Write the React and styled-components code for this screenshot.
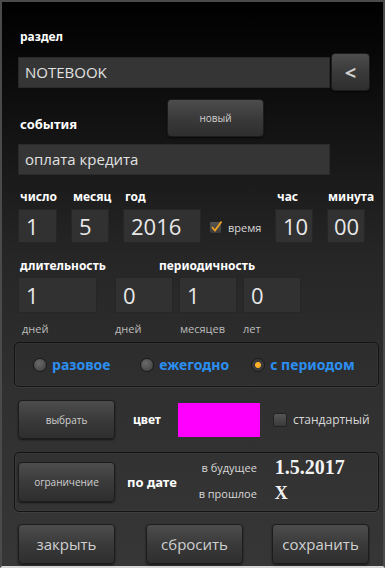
import React from "react";
import styled, { createGlobalStyle } from "styled-components";

const Global = createGlobalStyle`
  html, body {
    margin: 0;
    padding: 0;
    background: #000;
  }
  * {
    box-sizing: border-box;
  }
`;

const Screen = styled.div`
  width: 385px;
  height: 568px;
  border: 2px solid #4a4a4a;
  border-bottom: 2px solid #d8d8d8;
  background: linear-gradient(to bottom, #000 0%, #151515 25%, #262626 45%, #303030 70%, #363636 100%);
  font-family: "Open Sans", "Noto Sans", sans-serif;
  color: #e6e6e6;
  padding: 27px 0 0 16px;
  display: flex;
  flex-direction: column;
`;

const Label = styled.div`
  font-family: "Noto Sans", sans-serif;
  font-weight: 700;
  font-size: 12px;
  line-height: 16px;
  color: #fff;
  white-space: nowrap;
  padding-left: ${(p) => p.$pad ?? 2}px;
  width: ${(p) => (p.$w ? p.$w + "px" : "auto")};
  margin-top: ${(p) => p.$mt || 0}px;
`;

const Row = styled.div`
  display: flex;
  align-items: ${(p) => p.$align || "center"};
  margin-top: ${(p) => p.$mt || 0}px;
`;

const TextField = styled.div`
  width: 312px;
  height: 31px;
  background: #353535;
  border: 1px solid #2a2a2a;
  font-size: 15px;
  line-height: 29px;
  padding-left: 6px;
  color: #e2e2e2;
`;

const Button = styled.div`
  width: ${(p) => p.$w || 97}px;
  height: ${(p) => p.$h || 38}px;
  display: flex;
  align-items: center;
  justify-content: center;
  border-radius: 4px;
  border: 1px solid #1c1c1c;
  background: linear-gradient(to bottom, #4d4d4d, #3a3a3a 50%, #2e2e2e);
  box-shadow: 0 1px 2px rgba(0, 0, 0, 0.6);
  color: #d0d0d0;
  font-size: ${(p) => p.$fs || 10}px;
  margin-left: ${(p) => p.$ml || 0}px;
  flex-shrink: 0;
`;

const Field = styled.div`
  display: flex;
  flex-direction: column;
  width: ${(p) => (p.$w ? p.$w + "px" : "auto")};
  margin-left: ${(p) => p.$ml || 0}px;
`;

const NumBox = styled.div`
  width: ${(p) => p.$w}px;
  height: ${(p) => p.$h || 34}px;
  background: #313131;
  border: 1px solid #262626;
  font-size: 22px;
  line-height: ${(p) => (p.$h || 34) - 2}px;
  padding-left: ${(p) => p.$pl || 7}px;
  color: #e8e8e8;
  margin-top: ${(p) => p.$mt || 0}px;
`;

const Unit = styled.div`
  font-size: 11px;
  color: #bcbcbc;
  margin-top: 8px;
  white-space: nowrap;
  padding-left: ${(p) => p.$pl || 0}px;
`;

const Check = styled.div`
  width: 13px;
  height: 13px;
  border-radius: 2px;
  background: linear-gradient(to bottom, #555, #3a3a3a);
  border: 1px solid #222;
  position: relative;
  flex-shrink: 0;
`;

const Small = styled.span`
  font-size: ${(p) => p.$fs || 11}px;
  color: #d8d8d8;
  margin-left: ${(p) => p.$ml || 0}px;
`;

const Group = styled.div`
  width: 365px;
  height: ${(p) => p.$h}px;
  margin-left: -4px;
  margin-top: ${(p) => p.$mt}px;
  border: 1px solid #141414;
  border-radius: 5px;
  box-shadow: inset 0 0 0 1px rgba(255, 255, 255, 0.03), 0 1px 0 rgba(255, 255, 255, 0.06);
  display: flex;
  align-items: center;
  padding-left: ${(p) => p.$pl || 0}px;
`;

const Radio = styled.div`
  width: 14px;
  height: 14px;
  border-radius: 50%;
  border: 1px solid #1a1a1a;
  background: ${(p) =>
    p.$on
      ? "radial-gradient(circle, #ffb02a 0 2.5px, #3a3a3a 3.5px)"
      : "radial-gradient(circle at 40% 35%, #6a6a6a, #3c3c3c)"};
  margin-left: ${(p) => p.$ml || 0}px;
  flex-shrink: 0;
`;

const RadioText = styled.span`
  font-family: "Noto Sans", sans-serif;
  font-weight: 700;
  font-size: 14px;
  color: #2c8ef0;
  margin-left: 5px;
`;

const Swatch = styled.div`
  width: 82px;
  height: 34px;
  background: #ff00ff;
  margin-left: ${(p) => p.$ml || 0}px;
`;

const LimitGrid = styled.div`
  display: grid;
  grid-template-columns: 74px auto;
  column-gap: 18px;
  row-gap: 4px;
  align-items: center;
  margin-left: 6px;
  margin-top: -4px;
`;

const Right = styled.span`
  font-size: 11px;
  color: #d8d8d8;
  text-align: right;
`;

const Bold = styled.span`
  font-family: "Liberation Serif", serif;
  font-weight: 700;
  font-size: ${(p) => p.$fs || 20}px;
  color: #f2f2f2;
`;

const Footer = styled.div`
  display: flex;
  margin-top: 12px;
`;

export default function App() {
  return (
    <>
      <Global />
      <Screen>
        <Label>раздел</Label>
        <Row $mt={8}>
          <TextField>NOTEBOOK</TextField>
          <Button $w={39} $h={38} $fs={20} $ml={1} style={{ fontWeight: 700 }}>
            &lt;
          </Button>
        </Row>
        <Row $mt={8} $align="flex-start">
          <Label $w={149} $mt={17} style={{ fontSize: 13 }}>
            события
          </Label>
          <Button $w={97} $h={38}>новый</Button>
        </Row>
        <Row $mt={7}>
          <TextField>оплата кредита</TextField>
        </Row>
        <Row $mt={14} $align="flex-end">
          <Field $w={53}>
            <Label>число</Label>
            <NumBox $w={39} $mt={4}>1</NumBox>
          </Field>
          <Field $w={52}>
            <Label>месяц</Label>
            <NumBox $w={38} $mt={4}>5</NumBox>
          </Field>
          <Field $w={78}>
            <Label>год</Label>
            <NumBox $w={78} $mt={4}>2016</NumBox>
          </Field>
          <Row style={{ marginLeft: 8, marginBottom: 8, width: 66 }}>
            <Check>
              <svg width="13" height="13" viewBox="0 0 13 13" style={{ position: "absolute", left: 0, top: -2 }}>
                <path d="M2 7 L5 10.5 L11.5 1.5" fill="none" stroke="#f0a020" strokeWidth="1.8" />
              </svg>
            </Check>
            <Small $ml={6}>время</Small>
          </Row>
          <Field $w={52}>
            <Label>час</Label>
            <NumBox $w={38} $mt={4}>10</NumBox>
          </Field>
          <Field $w={40}>
            <Label $pad={1}>минута</Label>
            <NumBox $w={38} $mt={4} $pl={6}>00</NumBox>
          </Field>
        </Row>
        <Row $mt={15}>
          <Label $w={141}>длительность</Label>
          <Label $pad={0}>периодичность</Label>
        </Row>
        <Row $mt={3} $align="flex-start">
          <Field>
            <NumBox $w={79} $h={36}>1</NumBox>
            <Unit $pl={4}>дней</Unit>
          </Field>
          <Field $ml={18}>
            <NumBox $w={58} $h={36}>0</NumBox>
            <Unit>дней</Unit>
          </Field>
          <Field $ml={6}>
            <NumBox $w={58} $h={36}>1</NumBox>
            <Unit $pl={1}>месяцев</Unit>
          </Field>
          <Field $ml={6}>
            <NumBox $w={58} $h={36}>0</NumBox>
            <Unit>лет</Unit>
          </Field>
        </Row>
        <Group $h={45} $mt={6} $pl={18}>
          <Radio />
          <RadioText>разовое</RadioText>
          <Radio $ml={30} />
          <RadioText>ежегодно</RadioText>
          <Radio $ml={22} $on />
          <RadioText>с периодом</RadioText>
        </Group>
        <Row $mt={13}>
          <Button $w={97} $h={39}>выбрать</Button>
          <Label $pad={18}>цвет</Label>
          <Swatch $ml={17} />
          <Check style={{ marginLeft: 13, width: 14, height: 14 }} />
          <Small $fs={12} $ml={6}>стандартный</Small>
        </Row>
        <Group $h={60} $mt={13} $pl={3}>
          <Button $w={97} $h={40}>ограничение</Button>
          <Label $pad={12} style={{ fontSize: 13 }}>по дате</Label>
          <LimitGrid>
            <Right>в будущее</Right>
            <Bold>1.5.2017</Bold>
            <Right>в прошлое</Right>
            <Bold $fs={18}>X</Bold>
          </LimitGrid>
        </Group>
        <Footer>
          <Button $w={97} $h={40} $fs={15}>закрыть</Button>
          <Button $w={97} $h={40} $fs={15} $ml={31}>сбросить</Button>
          <Button $w={97} $h={40} $fs={15} $ml={29}>сохранить</Button>
        </Footer>
      </Screen>
    </>
  );
}
